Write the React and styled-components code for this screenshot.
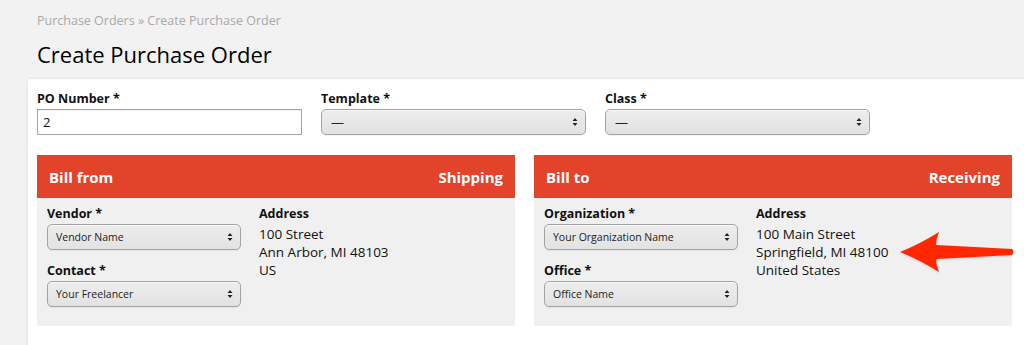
import styled, { createGlobalStyle } from 'styled-components'

const GlobalStyle = createGlobalStyle`
  html, body {
    margin: 0;
    padding: 0;
    background: #f2f2f2;
    font-family: "Open Sans", "Liberation Sans", Arial, sans-serif;
    color: #111;
    overflow: hidden;
  }
`

const App = () =>
  <>
    <GlobalStyle />
    <Page>
      <Header>
        <Breadcrumb>Purchase Orders » Create Purchase Order</Breadcrumb>
        <Title>Create Purchase Order</Title>
      </Header>

      <Card>
        <TopRow>
          <Field>
            <Label>PO Number *</Label>
            <TextInput defaultValue="2" />
          </Field>
          <Field>
            <Label>Template *</Label>
            <Select value="—" />
          </Field>
          <Field>
            <Label>Class *</Label>
            <Select value="—" />
          </Field>
        </TopRow>

        <Panels>
          <Panel
            title="Bill from"
            side="Shipping"
            fields={[['Vendor *', 'Vendor Name'], ['Contact *', 'Your Freelancer']]}
            address={['100 Street', 'Ann Arbor, MI 48103', 'US']}
          />
          <Panel
            title="Bill to"
            side="Receiving"
            fields={[['Organization *', 'Your Organization Name'], ['Office *', 'Office Name']]}
            address={['100 Main Street', 'Springfield, MI 48100', 'United States']}
            pointer
          />
        </Panels>
      </Card>
    </Page>
  </>

const Panel = props =>
  <PanelBox>
    <PanelHead>
      <span>{props.title}</span>
      <span>{props.side}</span>
    </PanelHead>
    <PanelBody>
      <Column>
        {props.fields.map(([label, value]) =>
          <Field key={label}>
            <Label>{label}</Label>
            <Select value={value} small />
          </Field>)}
      </Column>
      <Address>
        <Label>Address</Label>
        {props.address.map(line => <AddressLine key={line}>{line}</AddressLine>)}
      </Address>
      {props.pointer && <Pointer />}
    </PanelBody>
  </PanelBox>

const Select = props =>
  <SelectWrap $small={props.small}>
    <SelectBox $small={props.small} value={props.value} onChange={() => {}}>
      <option>{props.value}</option>
    </SelectBox>
    <Arrows width="6" height="10" viewBox="0 0 6 10">
      <path d="M3 1 L5.5 4 L0.5 4 Z M3 9 L5.5 6 L0.5 6 Z" fill="#222" />
    </Arrows>
  </SelectWrap>

const Pointer = () =>
  <PointerSvg width="120" height="48" viewBox="0 0 120 48">
    <path
      d="M2 22 Q22 14 41 2 Q38 9 38 15 L114 19 Q117 21.5 114 25 L38 29 Q38 35 41 42 Q22 30 2 22 Z"
      fill="#ff2600"
    />
  </PointerSvg>

const Page = styled.div`
  padding-left: 28px;
`

const Header = styled.div`
  padding: 12px 0 10px 9px;
`

const Breadcrumb = styled.div`
  font-size: 12.5px;
  line-height: 18px;
  color: #a9a9a9;
`

const Title = styled.h1`
  margin: 9px 0 0;
  font-size: 22px;
  line-height: 30px;
  font-weight: 400;
  color: #000;
`

const Card = styled.div`
  background: #fff;
  border-radius: 3px 0 0 0;
  box-shadow: 0 0 3px rgba(0, 0, 0, 0.12);
  padding: 12px 12px 40px 9px;
`

const TopRow = styled.div`
  display: flex;
  gap: 19px;

  & > div {
    width: 265px;
  }
`

const Field = styled.div`
  display: flex;
  flex-direction: column;
  gap: 2px;
`

const Label = styled.div`
  font-size: 12.5px;
  line-height: 16px;
  font-weight: 700;
  color: #111;
`

const TextInput = styled.input`
  box-sizing: border-box;
  height: 26px;
  margin: 0;
  padding: 0 5px;
  border: 1px solid #a6a6a6;
  box-shadow: inset 0 1px 1px rgba(0, 0, 0, 0.08);
  font-family: inherit;
  font-size: 13px;
  color: #111;
  background: #fff;
  outline: none;
`

const SelectWrap = styled.div`
  position: relative;
  width: ${p => p.$small ? '194px' : '100%'};
`

const SelectBox = styled.select`
  appearance: none;
  box-sizing: border-box;
  width: 100%;
  height: 26px;
  margin: 0;
  padding: 0 20px 0 ${p => p.$small ? '8px' : '9px'};
  border: 1px solid #a3a3a3;
  border-radius: 5px;
  background: linear-gradient(#ededed, #e2e2e2);
  box-shadow: inset 0 1px 0 rgba(255, 255, 255, 0.6), 0 1px 1px rgba(0, 0, 0, 0.05);
  font-family: inherit;
  font-size: ${p => p.$small ? '10.5px' : '13px'};
  color: #222;
  outline: none;
`

const Arrows = styled.svg`
  position: absolute;
  right: 8px;
  top: 8px;
  pointer-events: none;
`

const Panels = styled.div`
  display: grid;
  grid-template-columns: 478px 478px;
  gap: 19px;
  margin-top: 20px;
`

const PanelBox = styled.div`
  display: flex;
  flex-direction: column;
`

const PanelHead = styled.div`
  display: flex;
  justify-content: space-between;
  align-items: center;
  height: 43px;
  padding: 0 12px;
  background: #e2432a;
  color: #fff;
  font-size: 15px;
  font-weight: 700;
`

const PanelBody = styled.div`
  position: relative;
  display: flex;
  gap: 18px;
  height: 128px;
  box-sizing: border-box;
  padding: 8px 10px;
  background: #f0f0f0;
`

const Column = styled.div`
  display: flex;
  flex-direction: column;
  gap: 13px;
`

const Address = styled.div`
  display: flex;
  flex-direction: column;

  & > div:first-child {
    margin-bottom: 3px;
  }
`

const AddressLine = styled.div`
  font-size: 13.5px;
  line-height: 18px;
  color: #111;
`

const PointerSvg = styled.svg`
  position: absolute;
  left: 364px;
  top: 32px;
  filter: drop-shadow(0 1px 1px rgba(0, 0, 0, 0.15));
`

export default App
